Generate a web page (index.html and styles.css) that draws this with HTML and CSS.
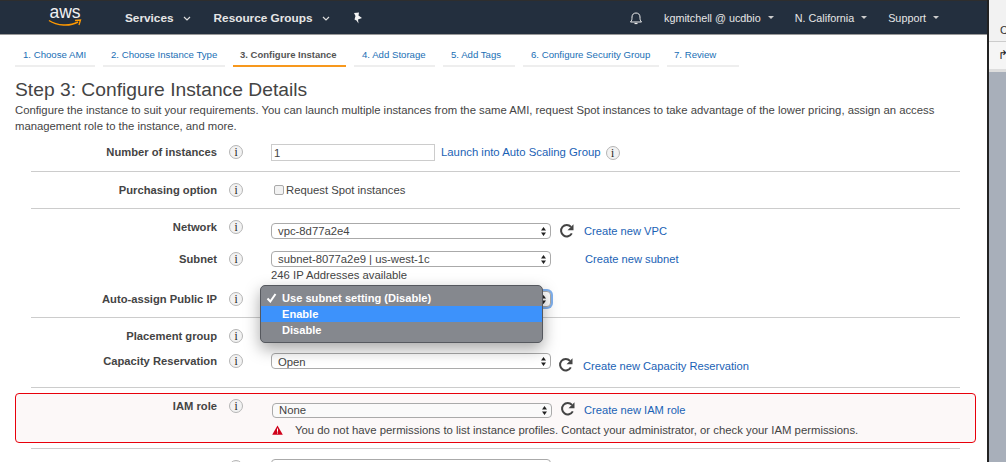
FILE: index.html
```html
<!DOCTYPE html>
<html lang="en">
<head>
    <meta charset="UTF-8">
    <meta name="viewport" content="width=device-width, initial-scale=1.0">
    <title>Step 3: Configure Instance Details</title>
    <link rel="stylesheet" href="styles.css">
</head>
<body>
    <div class="console">
        <div class="topbar">
            <div class="logo">
                <span class="logo-text">aws</span>
                <svg class="logo-smile" viewBox="0 0 34 8" width="34" height="8"><path d="M1 1.5C9 7 22 7.5 30 3" fill="none" stroke="#f90" stroke-width="1.5"/><path d="M27 1.5L32.5 1L31 6" fill="none" stroke="#f90" stroke-width="1.3"/></svg>
            </div>
            <div class="nav-item">Services <svg class="chev" viewBox="0 0 8 5" width="8" height="5"><path d="M1 1l3 3 3-3" fill="none" stroke="#ddd" stroke-width="1.2"/></svg></div>
            <div class="nav-item nav-groups">Resource Groups <svg class="chev" viewBox="0 0 8 5" width="8" height="5"><path d="M1 1l3 3 3-3" fill="none" stroke="#ddd" stroke-width="1.2"/></svg></div>
            <svg class="pin" viewBox="0 0 12 12" width="12" height="12"><path d="M3 1L8 .5 7.5 3.5 11 6 7 7.5 7.5 11.5 5.5 8.5 3.5 7.5 4.5 4z" fill="#f4f4f4"/></svg>
            <div class="nav-right">
                <svg class="bell" viewBox="0 0 14 14" width="14" height="14"><path d="M1.5 11C3 9.5 3 8 3 6c0-2.500 1.700-4 4-4s4 1.500 4 4c0 2 0 3.500 1.500 5z" fill="none" stroke="#eee" stroke-width="1"/><path d="M5.500 12.500h3" stroke="#eee" stroke-width="1.200"/></svg>
                <div class="nav-small nav-user">kgmitchell @ ucdbio <i class="caret"></i></div>
                <div class="nav-small">N. California <i class="caret"></i></div>
                <div class="nav-small">Support <i class="caret"></i></div>
            </div>
        </div>

        <div class="tabs">
            <a class="tab tab-1">1. Choose AMI</a>
            <a class="tab tab-2">2. Choose Instance Type</a>
            <a class="tab tab-3 active">3. Configure Instance</a>
            <a class="tab tab-4">4. Add Storage</a>
            <a class="tab tab-5">5. Add Tags</a>
            <a class="tab tab-6">6. Configure Security Group</a>
            <a class="tab tab-7">7. Review</a>
        </div>

        <div class="page">
            <h1>Step 3: Configure Instance Details</h1>
            <p class="intro">Configure the instance to suit your requirements. You can launch multiple instances from the same AMI, request Spot instances to take advantage of the lower pricing, assign an access management role to the instance, and more.</p>

            <div class="group group-count">
                <div class="row">
                    <label>Number of instances</label>
                    <span class="info">i</span>
                    <div class="control">
                        <div class="text-input">1</div>
                        <a class="link link-scaling">Launch into Auto Scaling Group</a>
                        <span class="info info-link">i</span>
                    </div>
                </div>
            </div>

            <div class="group group-purchase">
                <div class="row row-purchase">
                    <label>Purchasing option</label>
                    <span class="info">i</span>
                    <div class="control">
                        <span class="checkbox"></span>
                        <span class="plain">Request Spot instances</span>
                    </div>
                </div>
            </div>

            <div class="group group-network">
                <div class="row row-network">
                    <label>Network</label>
                    <span class="info">i</span>
                    <div class="control">
                        <div class="select">vpc-8d77a2e4<svg class="updown" viewBox="0 0 7 11" width="7" height="11"><path d="M3.500 1L6 4.500H1zM3.500 10L1 6.500H6z" fill="#222"/></svg></div>
                        <svg class="refresh" viewBox="0 0 16 16" width="16" height="16"><path d="M12.800 10.400A5.700 5.700 0 1 1 12 3.900" fill="none" stroke="#444" stroke-width="2"/><path d="M14.500 1.200v6h-6z" fill="#444"/></svg>
                        <a class="link">Create new VPC</a>
                    </div>
                </div>
                <div class="row row-subnet">
                    <label>Subnet</label>
                    <span class="info">i</span>
                    <div class="control">
                        <div class="select">subnet-8077a2e9 | us-west-1c<svg class="updown" viewBox="0 0 7 11" width="7" height="11"><path d="M3.500 1L6 4.500H1zM3.500 10L1 6.500H6z" fill="#222"/></svg></div>
                        <a class="link link-subnet">Create new subnet</a>
                    </div>
                </div>
                <div class="note">246 IP Addresses available</div>
                <div class="row row-assign">
                    <label>Auto-assign Public IP</label>
                    <span class="info">i</span>
                    <div class="control">
                        <div class="select select-focus"><svg class="updown" viewBox="0 0 7 11" width="7" height="11"><path d="M3.500 1L6 4.500H1zM3.500 10L1 6.500H6z" fill="#222"/></svg></div>
                    </div>
                </div>
            </div>

            <div class="group group-placement">
                <div class="row row-placement">
                    <label>Placement group</label>
                    <span class="info">i</span>
                    <div class="control"></div>
                </div>
                <div class="row row-capacity">
                    <label>Capacity Reservation</label>
                    <span class="info">i</span>
                    <div class="control">
                        <div class="select">Open<svg class="updown" viewBox="0 0 7 11" width="7" height="11"><path d="M3.500 1L6 4.500H1zM3.500 10L1 6.500H6z" fill="#222"/></svg></div>
                        <svg class="refresh" viewBox="0 0 16 16" width="16" height="16"><path d="M12.800 10.400A5.700 5.700 0 1 1 12 3.900" fill="none" stroke="#444" stroke-width="2"/><path d="M14.500 1.200v6h-6z" fill="#444"/></svg>
                        <a class="link">Create new Capacity Reservation</a>
                    </div>
                </div>
            </div>

            <div class="iam">
                <div class="row row-iam">
                    <label>IAM role</label>
                    <span class="info">i</span>
                    <div class="control">
                        <div class="select select-iam">None<svg class="updown" viewBox="0 0 7 11" width="7" height="11"><path d="M3.500 1L6 4.500H1zM3.500 10L1 6.500H6z" fill="#222"/></svg></div>
                        <svg class="refresh" viewBox="0 0 16 16" width="16" height="16"><path d="M12.800 10.400A5.700 5.700 0 1 1 12 3.900" fill="none" stroke="#444" stroke-width="2"/><path d="M14.500 1.200v6h-6z" fill="#444"/></svg>
                        <a class="link">Create new IAM role</a>
                    </div>
                </div>
                <div class="warning">
                    <svg viewBox="0 0 11 10" width="11" height="10"><path d="M5.500 .5L10.800 9.700H.2z" fill="#d0021b"/><path d="M5 3.500h1v3.300H5zM5 7.500h1v1H5z" fill="#fff"/></svg>
                    <span>You do not have permissions to list instance profiles. Contact your administrator, or check your IAM permissions.</span>
                </div>
            </div>
            <div class="iam-rule"></div>

            <div class="group group-last">
                <div class="row row-last">
                    <label></label>
                    <span class="info"></span>
                    <div class="control"><div class="select"></div></div>
                </div>
            </div>

            <div class="menu">
                <div class="menu-item"><svg class="tick" viewBox="0 0 11 10" width="11" height="10"><path d="M1.500 5.500l2.800 3L9.500 1" fill="none" stroke="#fff" stroke-width="2"/></svg>Use subnet setting (Disable)</div>
                <div class="menu-item selected">Enable</div>
                <div class="menu-item">Disable</div>
            </div>
        </div>
    </div>

    <div class="side">
        <div class="side-top"><span>C</span></div>
        <div class="side-row"><span>↱</span></div>
    </div>
</body>
</html>
```

FILE: styles.css
```css
html, body {
    margin: 0;
    padding: 0;
    height: 462px;
    overflow: hidden;
    background: #fff;
    font-family: "Liberation Sans", Arial, sans-serif;
    color: #444;
}
body {
    display: flex;
}
.console {
    width: 987px;
    flex: none;
    height: 462px;
    overflow: hidden;
}

/* top bar */
.topbar {
    height: 33px;
    border-top: 1px solid #2e2e2e;
    background: #232f3e;
    display: flex;
    align-items: center;
    color: #eee;
    box-shadow: 0 1px 0 #999;
}
.logo {
    margin-left: 48px;
    width: 34px;
    height: 26px;
    display: flex;
    flex-direction: column;
    align-items: center;
    margin-top: -3px;
}
.logo-text {
    font-size: 17.5px;
    line-height: 18px;
    color: #f2f2f2;
}
.logo-smile {
    margin-top: -2px;
}
.nav-item {
    font-size: 11.8px;
    font-weight: bold;
    color: #e6e6e6;
    margin-left: 43px;
    display: flex;
    align-items: center;
    gap: 9px;
}
.nav-groups {
    margin-left: 23px;
}
.chev {
    margin-top: 2px;
}
.pin {
    margin-left: 21px;
}
.nav-right {
    margin-left: auto;
    display: flex;
    align-items: center;
    padding-right: 48px;
}
.nav-small {
    font-size: 10.8px;
    color: #e6e6e6;
    display: flex;
    align-items: center;
    gap: 7px;
    margin-left: 21px;
}
.caret {
    width: 0;
    height: 0;
    border-left: 3px solid transparent;
    border-right: 3px solid transparent;
    border-top: 3px solid #ccc;
}

/* wizard steps */
.tabs {
    display: flex;
    gap: 8px;
    margin: 14px 0 0 15px;
}
.tab {
    box-sizing: border-box;
    height: 19px;
    padding-left: 8px;
    border-bottom: 2px solid #eee;
    font-size: 9.65px;
    line-height: 13px;
    color: #1a6fb5;
    white-space: nowrap;
}
.tab-1 { width: 80px; }
.tab-2 { width: 122px; }
.tab-3 { width: 113px; }
.tab-4 { width: 81px; }
.tab-5 { width: 72px; }
.tab-6 { width: 136px; }
.tab-7 { width: 72px; }
.tab-7 { padding-left: 7px; }
.tab.active {
    padding-left: 7px;
    color: #555;
    font-weight: bold;
    font-size: 9.5px;
    border-bottom-color: #f7981d;
}

/* main form */
.page {
    position: relative;
    padding: 0 0 0 15px;
}
h1 {
    margin: 11px 0 0;
    font-size: 19.25px;
    line-height: 24px;
    font-weight: normal;
    color: #444;
}
.intro {
    margin: 0;
    width: 935px;
    font-size: 11.3px;
    line-height: 16px;
    color: #444;
}
.group {
    box-sizing: border-box;
    margin-left: 16px;
    width: 929px;
    border-bottom: 1px solid #ccc;
}
.group-count {
    height: 29px;
    margin-top: 9px;
}
.group-purchase {
    height: 37px;
}
.group-network {
    height: 109px;
}
.group-placement {
    height: 70px;
}
.group-last {
    border-bottom: 0;
}
.row {
    display: grid;
    grid-template-columns: 186px 54px 1fr;
    align-items: start;
    padding-top: 1px;
}
.row label {
    font-size: 11.2px;
    font-weight: bold;
    line-height: 14px;
    text-align: right;
    color: #444;
    padding-top: 1px;
}
.info {
    box-sizing: border-box;
    width: 14px;
    height: 14px;
    margin-left: 12px;
    margin-top: 1px;
    border: 1px solid #b5b5b5;
    border-radius: 50%;
    background: #f2f2f2;
    font-family: "Liberation Serif", serif;
    font-size: 11.5px;
    line-height: 12px;
    text-align: center;
    color: #222;
}
.control {
    display: flex;
    align-items: center;
    min-height: 16px;
    font-size: 11.3px;
}
.plain {
    font-size: 11.3px;
    color: #444;
}
.link {
    font-size: 11.15px;
    line-height: 13px;
    color: #1a62b5;
}
.text-input {
    width: 160px;
    height: 15px;
    border: 1px solid #ccc;
    padding-left: 2px;
    line-height: 16px;
    font-size: 11.3px;
    color: #444;
}
.link-scaling {
    margin-left: 6px;
    font-size: 11.35px;
}
.info-link {
    margin-left: 5px;
    margin-top: 0;
}
.checkbox {
    width: 8px;
    height: 8px;
    margin-left: 3px;
    margin-right: 2px;
    border: 1px solid #aaa;
    border-radius: 2px;
    background: #f2f2f2;
}
.select {
    position: relative;
    width: 272px;
    height: 14px;
    padding-left: 6px;
    border: 1px solid #aaa;
    border-radius: 4px;
    background: #fff;
    font-size: 11.3px;
    line-height: 15px;
    color: #444;
    flex: none;
}
.updown {
    position: absolute;
    right: 3px;
    top: 2px;
}
.refresh {
    margin-left: 8px;
    margin-right: 9px;
    flex: none;
}
.row-purchase {
    padding-top: 10px;
}
.row-network {
    padding-top: 10px;
}
.row-network .control {
    margin-top: 4px;
}
.row-subnet {
    padding-top: 12px;
}
.link-subnet {
    margin-left: 34px;
}
.note {
    margin: 1px 0 0 240px;
    font-size: 11.3px;
    line-height: 14px;
    color: #444;
}
.row-assign {
    padding-top: 9px;
}
.select-focus {
    box-shadow: 0 0 0 2px #7fb0ee;
}
.row-placement {
    padding-top: 10px;
}
.row-capacity {
    padding-top: 9px;
}
.row-capacity .control {
    align-items: flex-start;
}
.row-capacity .select {
    line-height: 16px;
}
.row-capacity .refresh {
    margin: 4px 9px 0 7px;
}
.row-capacity .link {
    margin-top: 7px;
}

/* iam role, error state */
.iam {
    box-sizing: border-box;
    width: 961px;
    height: 50px;
    margin-top: 5px;
    border: 1px solid #e8000b;
    border-radius: 4px;
    background: #fcf8f8;
}
.row-iam {
    grid-template-columns: 201px 55px 1fr;
    padding-top: 4px;
}
.row-iam .control {
    align-items: flex-start;
}
.select-iam {
    height: 13px;
    margin-top: 5px;
    line-height: 13px;
    background: #fafafa;
}
.row-iam .updown {
    top: 1px;
}
.row-iam .refresh {
    margin-top: 3px;
    margin-right: 8px;
}
.row-iam .link {
    margin-top: 6px;
}
.warning {
    display: flex;
    align-items: center;
    gap: 12px;
    margin: 6px 0 0 256px;
    font-size: 11.35px;
    color: #444;
}
.iam-rule {
    margin: 5px 0 0 16px;
    width: 929px;
    height: 1px;
    background: #ccc;
}
.row-last {
    padding-top: 10px;
}

/* open dropdown */
.menu {
    position: absolute;
    left: 260px;
    top: 207px;
    width: 281px;
    padding: 4px 0;
    border: 1px solid #55585e;
    border-radius: 5px;
    background: #85888e;
    box-shadow: 0 6px 16px rgba(0, 0, 0, 0.35);
}
.menu-item {
    height: 16px;
    padding-left: 21px;
    font-size: 11.1px;
    font-weight: bold;
    line-height: 16px;
    color: #fff;
    position: relative;
}
.menu-item.selected {
    background: #3d92fb;
}
.tick {
    position: absolute;
    left: 5px;
    top: 3px;
}

/* neighbouring window */
.side {
    flex: 1;
    height: 462px;
    border-left: 2px solid #222;
    background: #a8afba;
}
.side-top {
    height: 41px;
    background: #f2f2f2;
    border-bottom: 1px solid #ccc;
    font-size: 11px;
    text-align: right;
    line-height: 60px;
    color: #333;
    overflow: hidden;
}
.side-row {
    height: 27px;
    background: #f5f5f5;
    border-bottom: 3px solid #ddd;
    font-size: 12px;
    line-height: 27px;
    padding-left: 9px;
    color: #222;
}
```
